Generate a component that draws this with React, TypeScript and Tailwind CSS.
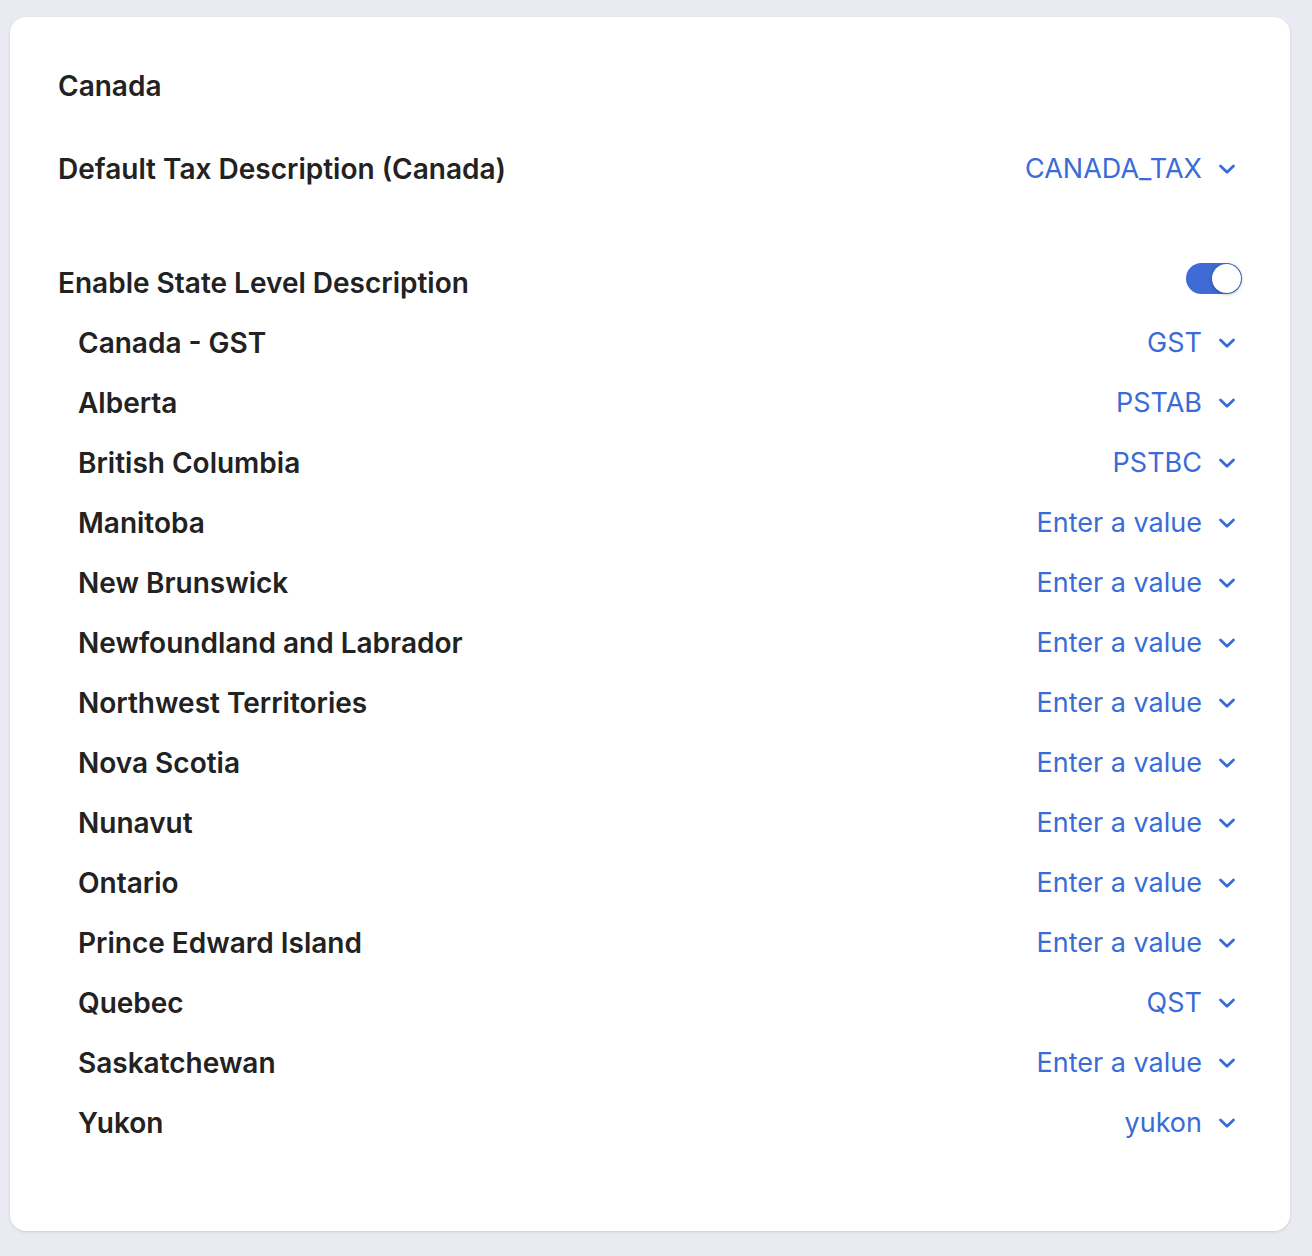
import React, { useState } from 'react';

const provinces: { name: string; value: string | null }[] = [
    { name: 'Canada - GST', value: 'GST' },
    { name: 'Alberta', value: 'PSTAB' },
    { name: 'British Columbia', value: 'PSTBC' },
    { name: 'Manitoba', value: null },
    { name: 'New Brunswick', value: null },
    { name: 'Newfoundland and Labrador', value: null },
    { name: 'Northwest Territories', value: null },
    { name: 'Nova Scotia', value: null },
    { name: 'Nunavut', value: null },
    { name: 'Ontario', value: null },
    { name: 'Prince Edward Island', value: null },
    { name: 'Quebec', value: 'QST' },
    { name: 'Saskatchewan', value: null },
    { name: 'Yukon', value: 'yukon' },
];

const Chevron = () => (
    <svg viewBox="0 0 20 20" className="w-5 h-5 ml-[15px]" fill="none" stroke="currentColor" strokeWidth={2.8} strokeLinecap="round" strokeLinejoin="round">
        <path d="M3.5 7l6.5 6.2L16.5 7" />
    </svg>
);

const ValuePicker = ({ value }: { value: string | null }) => (
    <button className="flex items-center text-[#3a6bd6] text-[27px] font-normal pr-[5px]">
        <span>{value ?? 'Enter a value'}</span>
        <Chevron />
    </button>
);

export default function App() {
    const [enabled, setEnabled] = useState(true);

    return (
        <div className="min-h-[1256px] bg-[#eaeaf3] pl-[10px] pr-[22px] pt-[17px] pb-[26px]" style={{ fontFamily: 'Inter, "Noto Sans", sans-serif' }}>
            <div className="bg-white rounded-2xl shadow-[0_1px_3px_rgba(0,0,0,0.12)] pl-12 pr-12 pt-[56px] pb-[78px] text-[#222]">
                {/* Header */}
                <h2 className="text-[28px] font-semibold leading-[62px] -mt-[18px] mb-[33px]">Canada</h2>

                <div className="flex items-center justify-between h-[40px] mt-[-1px] mb-[74px]">
                    <span className="text-[28px] font-semibold">Default Tax Description (Canada)</span>
                    <ValuePicker value="CANADA_TAX" />
                </div>

                <div className="flex items-center justify-between h-[40px] mb-[10px]">
                    <span className="text-[28px] font-semibold">Enable State Level Description</span>
                    <button
                        onClick={() => setEnabled(!enabled)}
                        className={`relative w-14 h-[31px] rounded-full -mt-[10px] ${enabled ? 'bg-[#3f6bd6]' : 'bg-gray-300'}`}
                    >
                        <span className={`absolute top-[1px] w-[29px] h-[29px] rounded-full bg-white shadow-[0_1px_4px_rgba(0,0,0,0.3)] ${enabled ? 'right-[1px]' : 'left-[1px]'}`} />
                    </button>
                </div>

                {/* Provinces */}
                <div className="pl-5 flex flex-col">
                    {provinces.map((p) => (
                        <div key={p.name} className="flex items-center justify-between h-[60px]">
                            <span className="text-[28px] font-semibold">{p.name}</span>
                            <ValuePicker value={p.value} />
                        </div>
                    ))}
                </div>
            </div>
        </div>
    );
}
